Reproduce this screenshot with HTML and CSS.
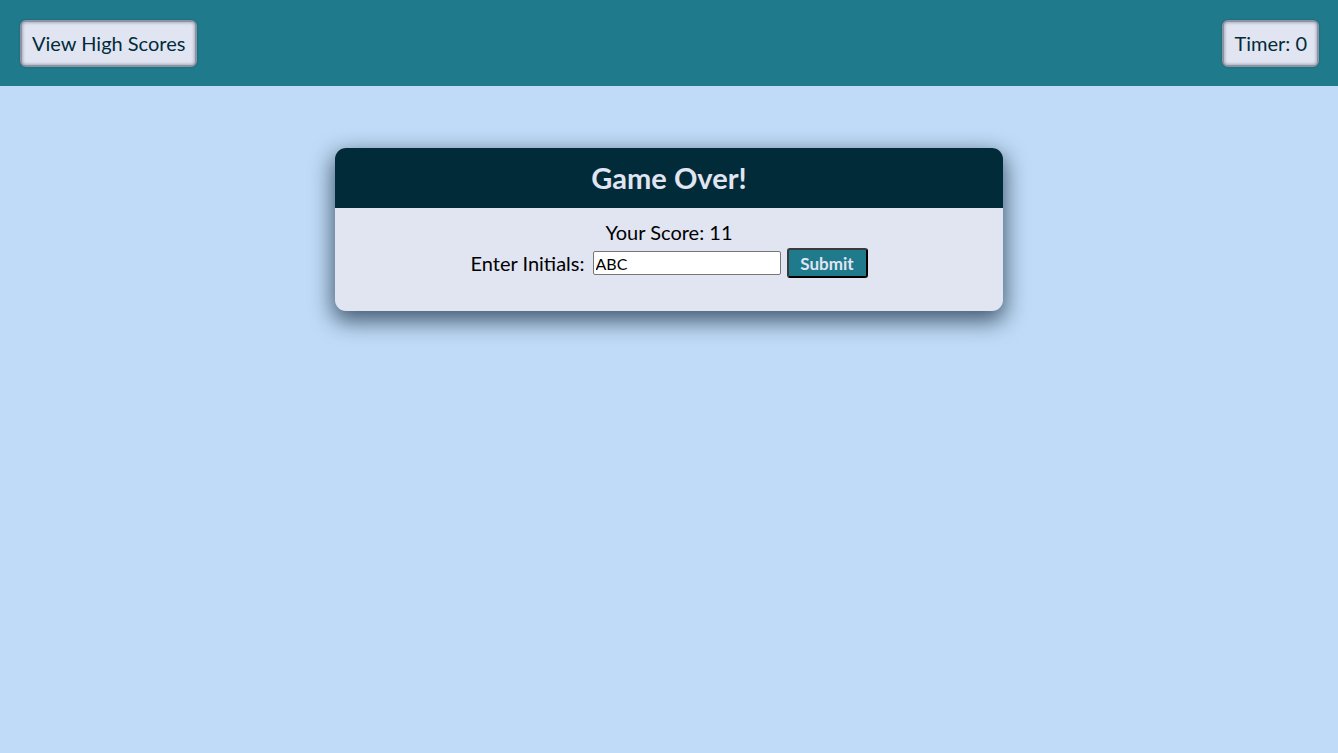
FILE: index.html
```html
<!DOCTYPE html>
<html>
<head>
<meta charset="utf-8">
<link rel="stylesheet" href="styles.css">
</head>
<body>
<header class="topbar">
  <button class="top-btn">View High Scores</button>
  <button class="top-btn">Timer: 0</button>
</header>
<main class="main">
  <section class="card">
    <h1 class="card-title">Game Over!</h1>
    <div class="card-body">
      <p class="score">Your Score: 11</p>
      <form class="initials">
        <label class="label">Enter Initials:</label>
        <input class="input" type="text" value="ABC">
        <button class="submit" type="button">Submit</button>
      </form>
    </div>
  </section>
</main>
</body>
</html>
```
FILE: styles.css
```css
html, body {
  margin: 0;
  padding: 0;
}
body {
  background: #bfdbf7;
  font-family: "Lato", "DejaVu Sans", sans-serif;
  color: #000;
  min-height: 753px;
}
.topbar {
  background: #1f7a8c;
  height: 86px;
  display: flex;
  justify-content: space-between;
  align-items: center;
  padding: 0 19px 0 20px;
  box-sizing: border-box;
}
.top-btn {
  font-family: inherit;
  font-size: 20px;
  color: #022b3a;
  background: #e1e5f2;
  border: 2px solid #8e93a3;
  border-radius: 6px;
  height: 47px;
  padding: 0 10px;
  box-shadow: inset 0 0 3px 1px #a9aebd, 0 0 2px rgba(0,0,0,0.25);
}
.main {
  display: flex;
  justify-content: center;
  padding-top: 62px;
}
.card {
  width: 668px;
  background: #e1e5f2;
  border-radius: 11px;
  overflow: hidden;
  box-shadow: 0 8px 22px 2px rgba(2, 20, 40, 0.65);
}
.card-title {
  margin: 0;
  height: 60px;
  background: #022b3a;
  color: #e1e5f2;
  font-size: 29px;
  font-weight: bold;
  display: flex;
  align-items: center;
  justify-content: center;
  padding-bottom: 2px;
  box-sizing: border-box;
}
.card-body {
  display: flex;
  flex-direction: column;
  align-items: center;
  padding: 12px 0 33px;
}
.score {
  margin: 0;
  font-size: 20px;
  line-height: 24px;
}
.initials {
  margin: 4px 0 0;
  display: flex;
  align-items: center;
}
.label {
  font-size: 20px;
  margin-right: 8px;
}
.input {
  width: 188px;
  height: 24px;
  box-sizing: border-box;
  border: 1px solid #767676;
  border-radius: 2px;
  font-family: inherit;
  font-size: 16px;
  padding: 0 2px;
  color: #000;
}
.submit {
  margin-left: 6px;
  height: 30px;
  width: 81px;
  background: #1f7a8c;
  color: #e1e5f2;
  font-family: inherit;
  font-weight: bold;
  font-size: 17px;
  border: 2px outset #3a3a3a;
  border-radius: 3px;
}
```
